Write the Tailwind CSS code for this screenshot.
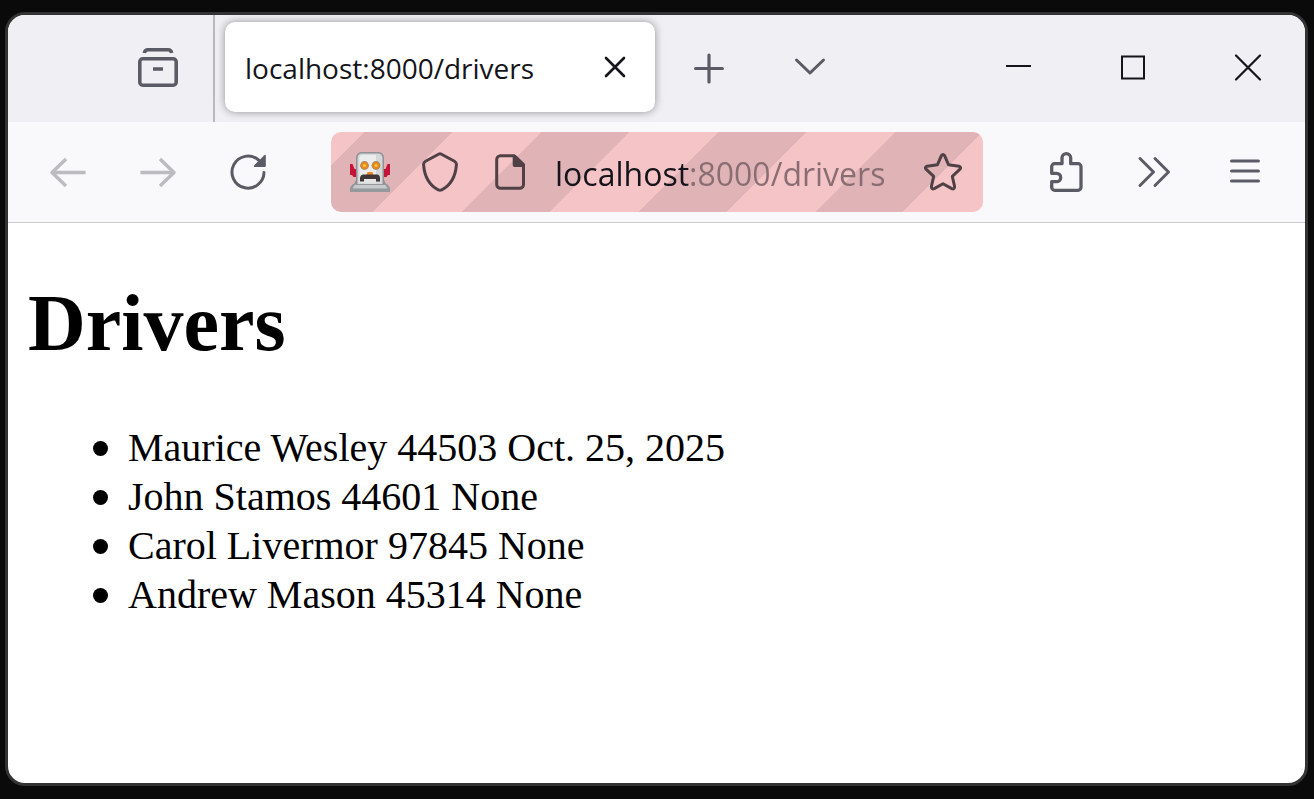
<!DOCTYPE html>
<html lang="en">
<head>
<meta charset="utf-8">
<title>localhost:8000/drivers</title>
<script src="https://cdn.jsdelivr.net/npm/@tailwindcss/browser@4"></script>
</head>
<body class="flex min-h-screen bg-[#0a0a0a] pt-3 pr-[6px] pb-[13px] pl-[5px]">
<div class="flex flex-1 flex-col overflow-hidden rounded-[20px] border-3 border-[#333333] bg-white font-['Open_Sans','Noto_Sans',sans-serif]">
  <header class="flex h-[107px] bg-[#f0eff4] text-[#5b5b66]">
    <div class="flex w-[207px] items-center justify-end border-r-2 border-[#b9b8bf] pr-[35px] pb-[2px]">
      <button aria-label="Firefox View">
        <svg class="size-10" viewBox="0 0 40 40" fill="none" stroke="currentColor" stroke-width="3.6"><rect x="1.8" y="10.8" width="36.4" height="26.4" rx="3"/><path d="M6.3 5q.6-3.2 3.6-3.2h20.2q3 0 3.6 3.2M15 21h10" /></svg>
      </button>
    </div>
    <div class="my-[7px] ml-[10px] flex h-[90px] w-[430px] items-center justify-between rounded-[10px] bg-white pr-5 pl-5 text-[#15141a] shadow-[0_0_8px_rgba(0,0,0,0.4)]">
      <span class="pt-px text-[28px]">localhost:8000/drivers</span>
      <button aria-label="Close tab" class="pb-px">
        <svg class="size-10" viewBox="0 0 40 40" fill="none" stroke="currentColor" stroke-width="2.6" stroke-linecap="round"><path d="M11 11l18 18M29 11L11 29"/></svg>
      </button>
    </div>
    <button aria-label="New tab" class="ml-[9px] flex w-[90px] items-center justify-center pb-[2px]">
      <svg class="size-10" viewBox="0 0 40 40" fill="none" stroke="currentColor" stroke-width="3.2" stroke-linecap="round"><path d="M6.6 20.500h26.8M20 7.100v26.8"/></svg>
    </button>
    <button aria-label="List all tabs" class="ml-[11px] flex w-[90px] items-center justify-center pb-[2px]">
      <svg class="size-10" viewBox="0 0 40 40" fill="none" stroke="currentColor" stroke-width="3" stroke-linecap="round" stroke-linejoin="round"><path d="M6.5 12L20 25 33.500 12"/></svg>
    </button>
    <div class="ml-auto flex pb-[2px] text-[#15141a]">
      <button aria-label="Minimize" class="flex w-[115px] items-center justify-center">
        <svg class="size-10" viewBox="0 0 40 40" fill="none" stroke="currentColor" stroke-width="2"><path d="M8 18h25"/></svg>
      </button>
      <button aria-label="Maximize" class="flex w-[115px] items-center justify-center">
        <svg class="size-10" viewBox="0 0 40 40" fill="none" stroke="currentColor" stroke-width="2"><rect x="9" y="8.500" width="22" height="22"/></svg>
      </button>
      <button aria-label="Close" class="flex w-[115px] items-center justify-center">
        <svg class="size-10" viewBox="0 0 40 40" fill="none" stroke="currentColor" stroke-width="2.2" stroke-linecap="round"><path d="M8 7.500l24 24M32 7.500L8 31.500"/></svg>
      </button>
    </div>
  </header>
  <nav class="flex h-[101px] items-center border-b border-[#cccccc] bg-[#f9f9fb] px-[15px] text-[#5b5b66]">
    <button aria-label="Back" class="flex h-20 w-[90px] items-center justify-center text-[#bbbbc0]">
      <svg class="size-10" viewBox="0 0 40 40" fill="none" stroke="currentColor" stroke-width="3.400" stroke-linejoin="round"><path d="M37.600 20.500H4M18 7L4 20.500 18 34"/></svg>
    </button>
    <button aria-label="Forward" class="flex h-20 w-[90px] items-center justify-center text-[#bbbbc0]">
      <svg class="size-10" viewBox="0 0 40 40" fill="none" stroke="currentColor" stroke-width="3.400" stroke-linejoin="round"><path d="M2.400 20.500H36M22 7l14 13.500L22 34"/></svg>
    </button>
    <button aria-label="Reload" class="flex h-20 w-[90px] items-center justify-center">
      <svg class="size-10" viewBox="0 0 40 40" fill="none" stroke="currentColor" stroke-width="3" stroke-linecap="round"><path d="M36 20.500A16 16 0 1 1 30.500 8"/><path fill="currentColor" stroke="none" d="M36.300 3.200Q37.600 2 37.800 4V14Q37.800 15 36.800 15H27Q25 14.800 26.200 13.300Z"/></svg>
    </button>
    <div class="mr-[37px] ml-[38px] flex h-20 min-w-0 flex-1 items-center rounded-[10px] bg-[repeating-linear-gradient(135deg,#f5c4c7_0px,#f5c4c7_24px,#e0b3b6_24px,#e0b3b6_86px,#f5c4c7_86px,#f5c4c7_125px)] pr-[5px] pl-1 text-[#4f4146]">
      <button aria-label="Browser is under remote control" class="flex h-full w-[70px] shrink-0 items-center justify-center">
        <svg class="size-10" viewBox="0 0 40 40">
          <path fill="#c4143a" d="M0 12h2.500l2 5h4v8H3.500L2 23H0zM40 12h-2.500l-2 5h-4v8h5l1.500-2h2z"/>
          <path fill="#8f9193" d="M11 0h18q5 1 5 6v22l3 6H3l3-6V6q0-5 5-6z"/>
          <path fill="#d4d6d7" d="M12 1.500H28q4.500 0 4.500 5v26H7.500V6.500q0-5 4.500-5z"/>
          <path fill="#ececed" d="M12 3h14v28H9.500V6q0-3 2.500-3z"/>
          <circle cx="14.500" cy="13.500" r="4.400" fill="#a08a6c"/><circle cx="26" cy="13.500" r="4.400" fill="#a08a6c"/>
          <circle cx="14.500" cy="13.500" r="3.500" fill="#e98a14"/><circle cx="26" cy="13.500" r="3.500" fill="#e98a14"/>
          <circle cx="14.500" cy="13.500" r="1.500" fill="#f9c04a"/><circle cx="26" cy="13.500" r="1.500" fill="#f9c04a"/>
          <path fill="#ef8420" d="M17.500 20h5l1 3h-7z"/>
          <path fill="#3f3635" d="M13 22.500h14.500q2.500.5 2.500 4v3h-4v-2.500H14v2.500h-4v-3q0-3.500 3-4z"/>
          <path fill="#e2e3e4" d="M14 27.500h12v4H14z"/>
          <path fill="#94999c" d="M3 32h34l3 3.500v4.500H0v-4.500z"/>
          <path fill="#c6cacc" d="M4.500 33h31l2 3.500h-35z"/>
        </svg>
      </button>
      <button aria-label="Tracking protection" class="flex h-full w-[70px] shrink-0 items-center justify-center">
        <svg class="size-10" viewBox="0 0 40 40" fill="none" stroke="currentColor" stroke-width="3"><path d="M18.500 2.200Q20 1.300 21.500 2.200L34.500 9.200Q36.600 10.400 36.400 12.800C35.500 24.500 31 33 21.700 37.800Q20 38.800 18.300 37.800C9 33 4.500 24.500 3.600 12.800Q3.400 10.400 5.500 9.200Z"/></svg>
      </button>
      <button aria-label="Site information" class="flex h-full w-[70px] shrink-0 items-center justify-center">
        <svg class="size-10" viewBox="0 0 40 40" fill="none" stroke="currentColor" stroke-width="3"><path d="M10.500 3.700H24L33.500 13V32.500a3.800 3.800 0 0 1-3.800 3.800H10.500a3.800 3.800 0 0 1-3.800-3.800V7.500a3.800 3.800 0 0 1 3.800-3.800Z"/><path fill="currentColor" stroke="none" d="M22.700 3h3L34.500 11.500V15H24.700a2 2 0 0 1-2-2Z"/></svg>
      </button>
      <input type="text" aria-label="Address" value="localhost:8000/drivers" class="ml-[10px] h-full min-w-0 flex-1 bg-[linear-gradient(to_right,#15141a_134px,#886d72_134px)] bg-clip-text pt-[2px] text-[32px] text-transparent outline-none">
      <button aria-label="Bookmark this page" class="flex h-full w-[70px] shrink-0 items-center justify-center">
        <svg class="size-10" viewBox="0 0 40 40" fill="none" stroke="currentColor" stroke-width="3" stroke-linejoin="round"><path d="M18.500 3.400Q20 1.400 21.500 3.400L25.600 12.800 36 14.200Q38.600 15.200 37 17.200L29.300 24.300 31.600 34.500Q31.500 37.700 28.800 36.600L20 31.700 11.200 36.600Q8.500 37.700 8.400 34.500L10.700 24.300 3 17.200Q1.400 15.200 4 14.200L14.400 12.800Z"/></svg>
      </button>
    </div>
    <button aria-label="Extensions" class="flex h-20 w-[90px] items-center justify-center">
      <svg class="size-10" viewBox="0 0 40 40" fill="none" stroke="currentColor" stroke-width="3.300" stroke-linejoin="round"><path d="M6.700 21.300V14.700a3 3 0 0 1 3-3H17V6a4.350 4.350 0 0 1 8.700 0V11.700H33a3 3 0 0 1 3 3V35.300a3 3 0 0 1-3 3H9.700a3 3 0 0 1-3-3V29.700H11.500a4.200 4.200 0 0 0 0-8.400Z"/></svg>
    </button>
    <button aria-label="More tools" class="flex h-20 w-[90px] items-center justify-center">
      <svg class="size-10" viewBox="0 0 40 40" fill="none" stroke="currentColor" stroke-width="3" stroke-linecap="round" stroke-linejoin="round"><path d="M5 6.500L18.500 20 5 33.500M20 6.500L33.500 20 20 33.500"/></svg>
    </button>
    <button aria-label="Open application menu" class="flex h-20 w-[90px] items-center justify-center">
      <svg class="size-10" viewBox="0 0 40 40" fill="none" stroke="currentColor" stroke-width="3.200" stroke-linecap="round"><path d="M6.600 9h26.800M6.600 19h26.800M6.600 29h26.800"/></svg>
    </button>
  </nav>
  <main class="flex-1 px-5 pt-[54px] font-['Liberation_Serif',serif] text-black">
    <h1 class="text-[80px] leading-[92px] font-bold">Drivers</h1>
    <ul class="mt-[54px] pl-[65px] text-[40px] leading-[49px]">
      <li class="flex items-center gap-5 before:mt-[2px] before:size-[15px] before:rounded-full before:bg-black before:content-['']">Maurice Wesley 44503 Oct. 25, 2025</li>
      <li class="flex items-center gap-5 before:mt-[2px] before:size-[15px] before:rounded-full before:bg-black before:content-['']">John Stamos 44601 None</li>
      <li class="flex items-center gap-5 before:mt-[2px] before:size-[15px] before:rounded-full before:bg-black before:content-['']">Carol Livermor 97845 None</li>
      <li class="flex items-center gap-5 before:mt-[2px] before:size-[15px] before:rounded-full before:bg-black before:content-['']">Andrew Mason 45314 None</li>
    </ul>
  </main>
</div>
</body>
</html>
